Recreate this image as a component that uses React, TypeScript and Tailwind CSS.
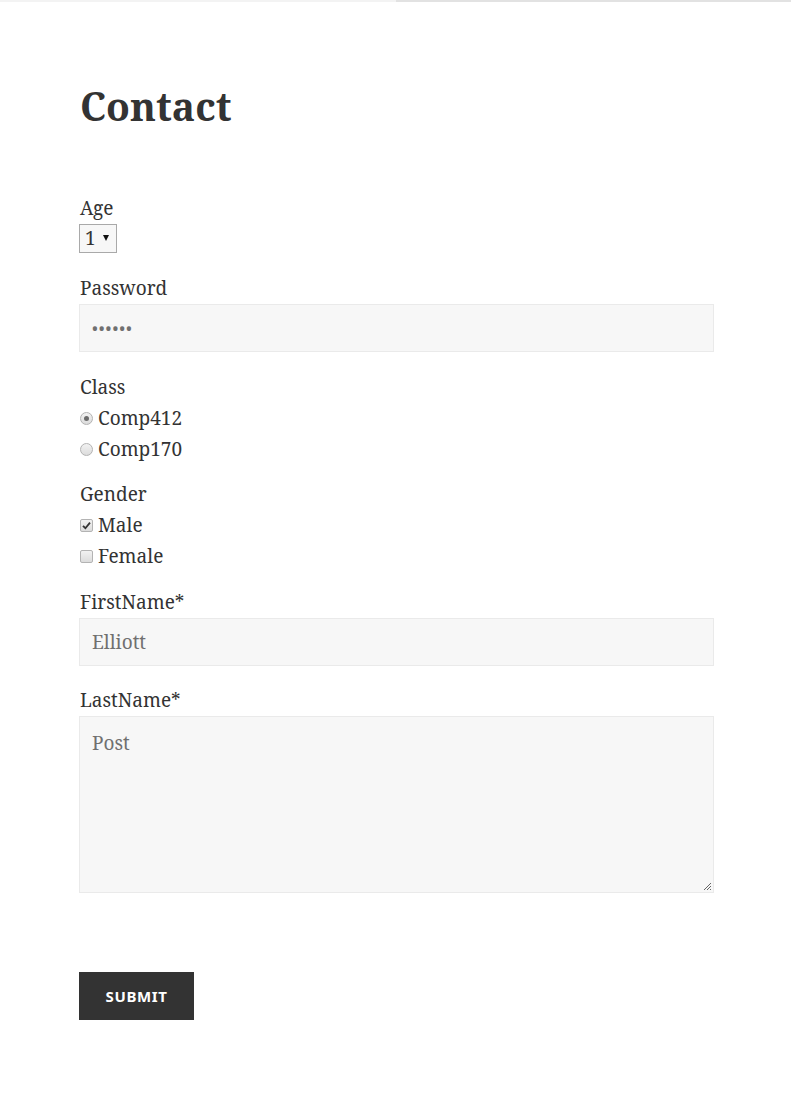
import React from 'react'

const serif = "font-['Noto_Serif','DejaVu_Serif',serif]"

const Label = ({ children, className = '' }: { children: React.ReactNode; className?: string }) => (
  <div className={`relative -top-px pl-px text-[19px] leading-[30px] text-[#333] ${className}`}>{children}</div>
)

const Radio = ({ checked, label }: { checked?: boolean; label: string }) => (
  <label className="flex items-center h-[31px] pl-px text-[19px] text-[#333]">
    <span className="w-[13px] h-[13px] rounded-full border border-[#b3b3b3] bg-gradient-to-b from-[#f2f2f2] to-[#dcdcdc] flex items-center justify-center mr-[5px]">
      {checked && <span className="w-[5px] h-[5px] rounded-full bg-[#6b6b6b]" />}
    </span>
    {label}
  </label>
)

const Check = ({ checked, label }: { checked?: boolean; label: string }) => (
  <label className="flex items-center h-[31px] pl-px text-[19px] text-[#333]">
    <span className="w-[13px] h-[13px] rounded-[2px] border border-[#b3b3b3] bg-gradient-to-b from-[#f2f2f2] to-[#dcdcdc] flex items-center justify-center mr-[5px]">
      {checked && (
        <svg width="9" height="9" viewBox="0 0 9 9">
          <path d="M1 4.8 L3.4 7.2 L8 1.6" stroke="#333" strokeWidth="1.8" fill="none" />
        </svg>
      )}
    </span>
    {label}
  </label>
)

export default function App() {
  return (
    <div className={`min-h-screen bg-white ${serif}`}>
      <div className="flex h-[2px]">
        <div className="w-[396px] bg-[#f3f3f3]" />
        <div className="flex-1 bg-[#e2e2e2]" />
      </div>
      <main className="pl-[79px] pr-[77px]">
        <h1 className="pt-[76px] pl-px text-[39px] leading-[56px] font-bold text-[#333]">Contact</h1>

        <form className="mt-[60px]" onSubmit={(e) => e.preventDefault()}>
          <Label>Age</Label>
          <div className="relative w-[38px] h-[29px] border border-[#a9a9a9] bg-[#f7f7f7] flex items-center pl-[5px] text-[19px] text-[#333]">
            1
            <span className="absolute right-[7px] top-[10px] w-0 h-0 border-l-[3.5px] border-r-[3.5px] border-t-[6px] border-l-transparent border-r-transparent border-t-[#111]" />
          </div>

          <Label className="mt-[21px]">Password</Label>
          <div className="h-[48px] border border-[#eaeaea] bg-[#f7f7f7] flex items-center px-[12px] text-[#707070] text-[16px] tracking-[1px]">
            ••••••
          </div>

          <Label className="mt-[21px]">Class</Label>
          <Radio checked label="Comp412" />
          <Radio label="Comp170" />

          <Label className="mt-[15px]">Gender</Label>
          <Check checked label="Male" />
          <Check label="Female" />

          <Label className="mt-[16px]">FirstName*</Label>
          <div className="h-[48px] border border-[#eaeaea] bg-[#f7f7f7] flex items-center px-[12px] text-[19px] text-[#707070]">
            Elliott
          </div>

          <Label className="mt-[20px]">LastName*</Label>
          <div className="relative h-[177px] border border-[#eaeaea] bg-[#f7f7f7] px-[12px] pt-[11px] text-[19px] leading-[30px] text-[#707070]">
            Post
            <svg className="absolute right-[1px] bottom-[1px]" width="9" height="9" viewBox="0 0 9 9">
              <path d="M8 1 L1 8 M8 4 L4 8 M8 7 L7 8" stroke="#666" strokeWidth="1" />
            </svg>
          </div>

          <button
            type="submit"
            className="mt-[79px] w-[115px] h-[48px] bg-[#333] text-white font-['Noto_Sans',sans-serif] font-bold text-[15px] tracking-[0.04em] uppercase"
          >
            Submit
          </button>
        </form>
      </main>
    </div>
  )
}
